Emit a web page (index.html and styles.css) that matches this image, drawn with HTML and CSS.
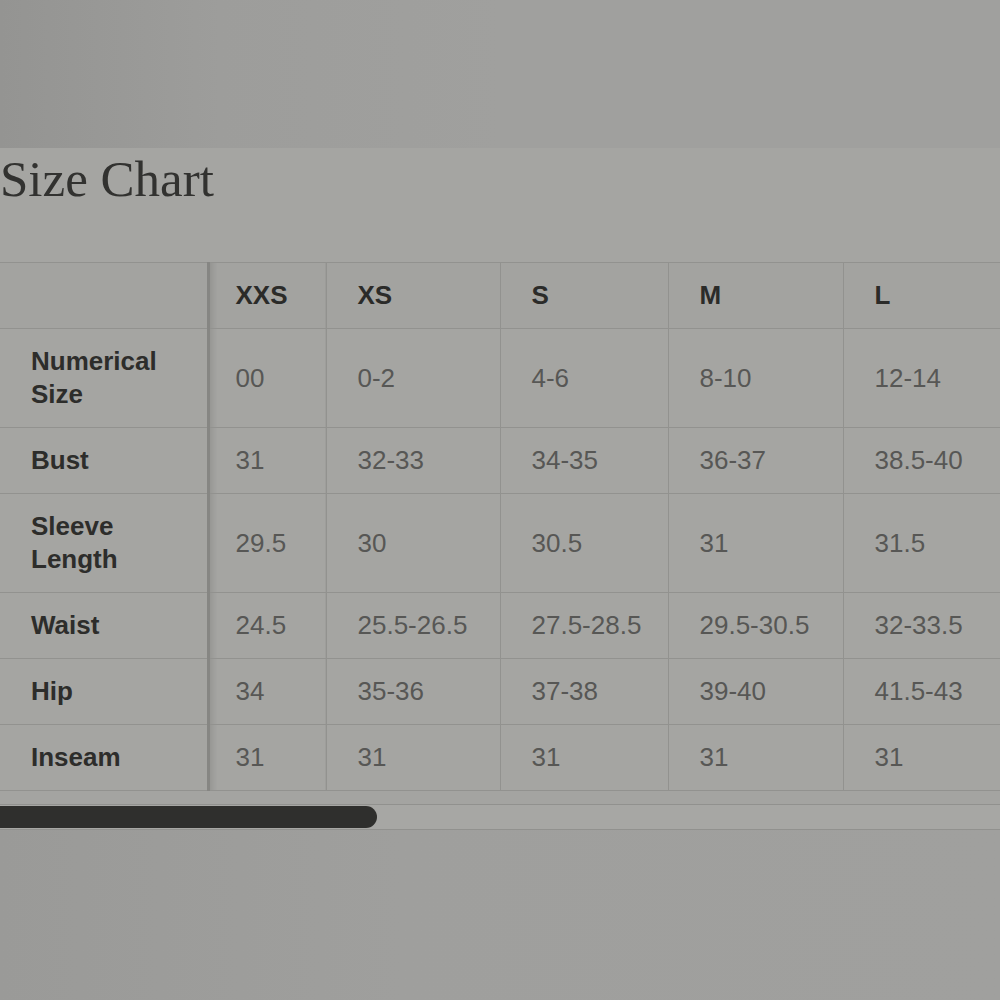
FILE: index.html
```html
<!DOCTYPE html>
<html lang="en">
<head>
<meta charset="utf-8">
<title>Size Chart</title>
<link rel="stylesheet" href="styles.css">
</head>
<body>
<div class="page">
  <div class="top"></div>
  <section class="title-band">
    <h1 class="title">Size Chart</h1>
  </section>
  <div class="table-wrap">
    <table class="chart">
      <colgroup>
        <col class="c-label">
        <col class="c-xxs">
        <col class="c-xs">
        <col class="c-s">
        <col class="c-m">
        <col class="c-l">
      </colgroup>
      <thead>
        <tr class="r-head">
          <th class="label"></th>
          <th class="first">XXS</th>
          <th>XS</th>
          <th>S</th>
          <th>M</th>
          <th>L</th>
        </tr>
      </thead>
      <tbody>
        <tr class="r-tall">
          <td class="label">Numerical<br>Size</td>
          <td class="first">00</td><td>0-2</td><td>4-6</td><td>8-10</td><td>12-14</td>
        </tr>
        <tr class="r-short">
          <td class="label">Bust</td>
          <td class="first">31</td><td>32-33</td><td>34-35</td><td>36-37</td><td>38.5-40</td>
        </tr>
        <tr class="r-tall">
          <td class="label">Sleeve<br>Length</td>
          <td class="first">29.5</td><td>30</td><td>30.5</td><td>31</td><td>31.5</td>
        </tr>
        <tr class="r-short">
          <td class="label">Waist</td>
          <td class="first">24.5</td><td>25.5-26.5</td><td>27.5-28.5</td><td>29.5-30.5</td><td>32-33.5</td>
        </tr>
        <tr class="r-short">
          <td class="label">Hip</td>
          <td class="first">34</td><td>35-36</td><td>37-38</td><td>39-40</td><td>41.5-43</td>
        </tr>
        <tr class="r-short">
          <td class="label">Inseam</td>
          <td class="first">31</td><td>31</td><td>31</td><td>31</td><td>31</td>
        </tr>
      </tbody>
    </table>
  </div>
  <div class="scroll-gap"></div>
  <div class="scrollbar">
    <div class="thumb"></div>
  </div>
  <div class="bottom"></div>
</div>
</body>
</html>
```

FILE: styles.css
```css
html, body {
  margin: 0;
  padding: 0;
  background: #9f9f9c;
}

body {
  width: 1000px;
  height: 1000px;
  overflow: hidden;
}

.page {
  width: 1000px;
  height: 1000px;
  overflow: hidden;
  background: linear-gradient(to right, #949492 0px, #9d9d9b 220px, #a0a09e 500px, #a0a09e 1000px);
  display: flex;
  flex-direction: column;
}

.top {
  height: 148px;
  flex: none;
}

.title-band {
  flex: none;
  height: 114px;
  box-sizing: border-box;
  padding-top: 6px;
  background: #a5a5a2;
}

.title {
  margin: 0;
  font-family: "Liberation Serif", "Times New Roman", serif;
  font-weight: normal;
  font-size: 51px;
  line-height: 50px;
  color: #323230;
}

.table-wrap {
  flex: none;
  width: 1000px;
  overflow: hidden;
}

.chart {
  border-collapse: collapse;
  table-layout: fixed;
  width: 1160px;
  font-family: "Liberation Sans", Arial, sans-serif;
  font-size: 26px;
  background: #a5a5a2;
}

.c-label { width: 208px; }
.c-xxs { width: 118px; }
.c-xs { width: 174px; }
.c-s { width: 168px; }
.c-m { width: 175px; }
.c-l { width: 517px; }

.chart th,
.chart td {
  border: 1px solid #92928f;
  padding: 0 0 0 31px;
  text-align: left;
  vertical-align: middle;
  line-height: 33px;
}

.chart th {
  font-weight: bold;
  color: #2b2b29;
  background: #a3a3a0;
}

.chart td {
  font-weight: normal;
  color: #575755;
}

.chart .label {
  font-weight: bold;
  color: #2d2d2b;
  border-left: none;
  border-right: 3px solid #868683;
}

.chart .first {
  padding-left: 26px;
  background-image: linear-gradient(to right, rgba(0, 0, 0, 0.09), rgba(0, 0, 0, 0) 8px);
}

.chart thead th {
  border-top: 1px solid #92928f;
}

.r-head { height: 66px; }
.r-tall { height: 99px; }
.r-short { height: 66px; }

.scroll-gap {
  flex: none;
  height: 13px;
  background: #a4a4a1;
}

.scrollbar {
  flex: none;
  height: 26px;
  box-sizing: border-box;
  border-top: 1px solid #91918e;
  border-bottom: 1px solid #91918e;
  background: #a7a7a4;
  padding-top: 1px;
}

.thumb {
  width: 377px;
  height: 22px;
  border-radius: 0 11px 11px 0;
  background: #2f2f2d;
}

.bottom {
  flex: 1;
  background: linear-gradient(to right, #9a9a98 0px, #9f9f9d 400px, #a0a09e 1000px);
}
```
